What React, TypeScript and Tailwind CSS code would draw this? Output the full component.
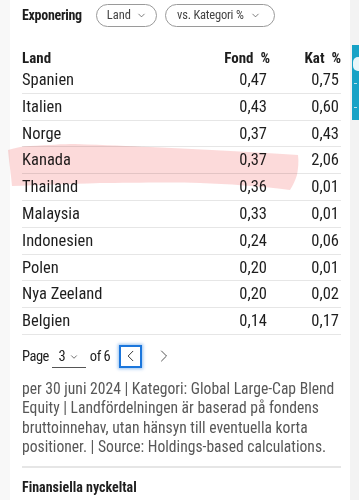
import React from 'react';
import { ChevronDown, ChevronLeft, ChevronRight } from 'lucide-react';

const rows = [
  { land: 'Spanien', fond: '0,47', kat: '0,75' },
  { land: 'Italien', fond: '0,43', kat: '0,60' },
  { land: 'Norge', fond: '0,37', kat: '0,43' },
  { land: 'Kanada', fond: '0,37', kat: '2,06' },
  { land: 'Thailand', fond: '0,36', kat: '0,01' },
  { land: 'Malaysia', fond: '0,33', kat: '0,01' },
  { land: 'Indonesien', fond: '0,24', kat: '0,06' },
  { land: 'Polen', fond: '0,20', kat: '0,01' },
  { land: 'Nya Zeeland', fond: '0,20', kat: '0,02' },
  { land: 'Belgien', fond: '0,14', kat: '0,17' },
];

const font = '"Roboto Condensed", "Liberation Sans Narrow", "DejaVu Sans Condensed", "Liberation Sans", sans-serif';

const App: React.FC = () => {
  return (
    <div className="flex w-[359px] h-[500px] overflow-hidden bg-white text-[#1e1e1e]" style={{ fontFamily: font }}>
      {/* vänster kant */}
      <div className="w-[10px] shrink-0 bg-[#f8f8f8]" />

      <div className="relative flex-1 pl-[12px] pr-[9px]">
        {/* Exponering + filter */}
        <div className="flex h-[31px] items-center">
          <span className="text-[14px] font-bold tracking-[-0.3px]">Exponering</span>
          <button className="ml-[14px] flex h-[23px] items-center gap-[5px] rounded-full border border-[#9a9a9a] pl-[10px] pr-[9px] text-[12.5px] text-[#444]">
            Land <ChevronDown size={11} strokeWidth={1.5} />
          </button>
          <button className="ml-[8px] flex h-[23px] items-center gap-[6px] rounded-full border border-[#9a9a9a] pl-[11px] pr-[13px] text-[12.5px] tracking-[-0.2px] text-[#444]">
            vs. Kategori % <ChevronDown size={11} strokeWidth={1.5} />
          </button>
        </div>

        {/* Tabell */}
        <div className="mt-[18px] flex h-[18px] items-center text-[15px] font-bold">
          <span className="flex-1">Land</span>
          <span className="w-[80px] text-right">Fond&nbsp; %</span>
          <span className="w-[71px] text-right">Kat&nbsp; %</span>
        </div>

        <div className="relative">
          {rows.map((r) => (
            <div key={r.land} className="flex h-[26.8px] items-center border-b border-[#e6e6e6] pt-[1px] text-[16.5px]">
              <span className="flex-1">{r.land}</span>
              <span className="w-[80px] text-right pr-[2px]">{r.fond}</span>
              <span className="w-[72px] text-right pr-[2px]">{r.kat}</span>
            </div>
          ))}

          {/* markering över Kanada */}
          <svg className="pointer-events-none absolute left-[-14px] top-[77px] mix-blend-multiply" width="300" height="50" viewBox="0 0 300 50">
            <path
              d="M0 6 C 8 4, 14 2, 22 2 C 40 1, 55 0, 67 0 C 100 1, 120 2, 142 3 C 200 6, 250 8, 290 11 C 291 18, 290 25, 289 31 C 287 37, 285 41, 282 46 C 250 42, 220 40, 192 39 C 160 38, 120 39, 92 39 C 60 40, 30 41, 4 42 C 3 30, 1 18, 0 6 Z"
              fill="#fcd4d4"
              opacity="0.85"
            />
          </svg>
        </div>

        {/* Sidnavigering */}
        <div className="mt-[10px] flex h-[23px] items-center text-[14.5px] tracking-[-0.5px]">
          <span>Page</span>
          <div className="ml-[3px] flex h-[24px] w-[34px] items-center justify-center gap-[4px] border-b border-[#555] pt-[2px]">
            <span>3</span>
            <ChevronDown size={10} strokeWidth={1.5} />
          </div>
          <span className="ml-[4px]">of 6</span>
          <button className="ml-[9px] flex h-[23px] w-[23px] items-center justify-center border-2 border-[#1b76dc] shadow-[0_0_3px_1px_rgba(27,118,220,0.45)]">
            <ChevronLeft size={20} strokeWidth={1.1} />
          </button>
          <button className="ml-[10px] flex h-[23px] w-[23px] items-center justify-center text-[#444]">
            <ChevronRight size={20} strokeWidth={1.1} />
          </button>
        </div>

        <p className="mt-[12px] text-[15.6px] leading-[19.4px] text-[#575757]">
          per 30 juni 2024 | Kategori: Global Large-Cap Blend Equity | Landfördelningen är baserad på fondens bruttoinnehav, utan hänsyn till eventuella korta positioner. | Source: Holdings-based calculations.
        </p>

        <div className="mt-[8px] h-[2px] bg-[#e6e6e6]" />

        <div className="mt-[9px] text-[14px] font-bold">Finansiella nyckeltal</div>
      </div>

      {/* höger kant */}
      <div className="w-[9px] shrink-0 bg-[#f3f3f3] pt-[45px] pl-[2px]">
        <div className="relative h-[75px] w-full overflow-hidden bg-[#17a2c6]">
          <div className="absolute left-[1px] top-[12px] h-[14px] w-[10px] rounded-full bg-white/90" />
          <div className="absolute left-[2px] top-[38px] h-[1px] w-[3px] bg-white/70" />
          <div className="absolute left-[2px] top-[62px] h-[1px] w-[3px] bg-white/70" />
        </div>
      </div>
    </div>
  );
};

export default App;
